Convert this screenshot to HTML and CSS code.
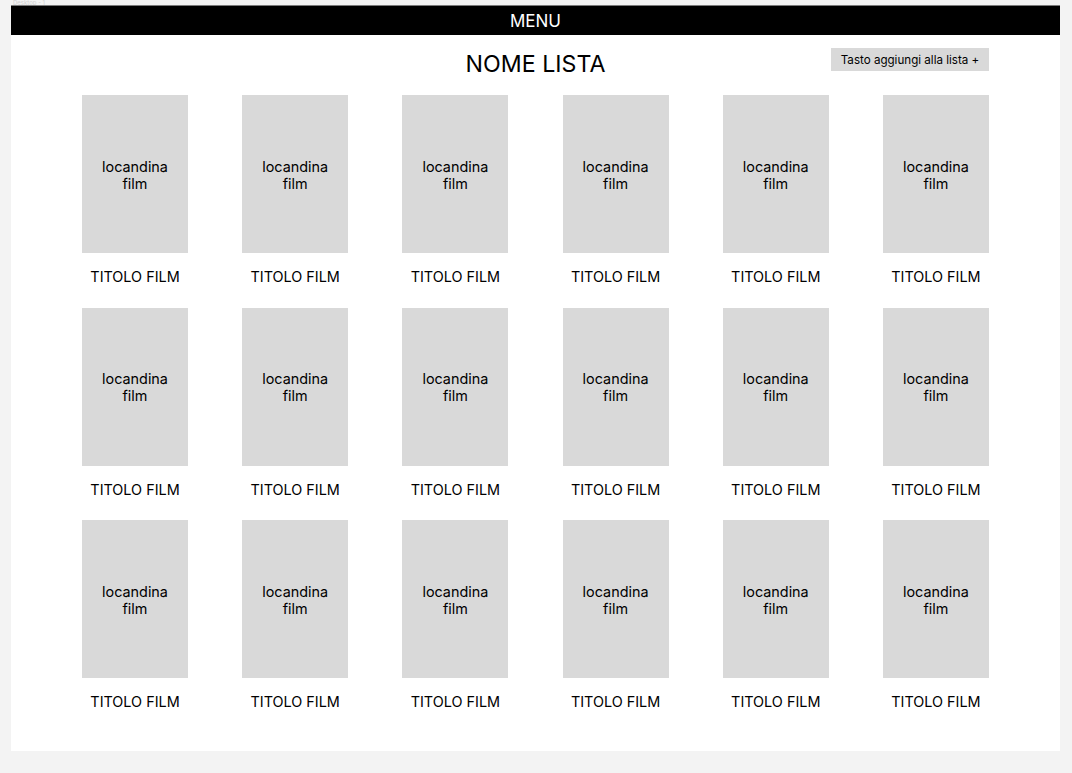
FILE: index.html
```html
<!DOCTYPE html>
<html lang="it">
<head>
<meta charset="utf-8">
<title>Nome lista</title>
<link rel="stylesheet" href="styles.css">
</head>
<body>
<div class="canvas-label"><span>Desktop - 1</span></div>
<div class="frame">
  <div class="menu">MENU</div>
  <div class="content">
    <div class="header">
      <div></div>
      <h1 class="list-title">NOME LISTA</h1>
      <div class="header-right"><button class="add-btn">Tasto aggiungi alla lista +</button></div>
    </div>
    <div class="grid">
      <div class="card"><div class="poster"><span>locandina film</span></div><div class="film-title">TITOLO FILM</div></div>
      <div class="card"><div class="poster"><span>locandina film</span></div><div class="film-title">TITOLO FILM</div></div>
      <div class="card"><div class="poster"><span>locandina film</span></div><div class="film-title">TITOLO FILM</div></div>
      <div class="card"><div class="poster"><span>locandina film</span></div><div class="film-title">TITOLO FILM</div></div>
      <div class="card"><div class="poster"><span>locandina film</span></div><div class="film-title">TITOLO FILM</div></div>
      <div class="card"><div class="poster"><span>locandina film</span></div><div class="film-title">TITOLO FILM</div></div>
      <div class="card"><div class="poster"><span>locandina film</span></div><div class="film-title">TITOLO FILM</div></div>
      <div class="card"><div class="poster"><span>locandina film</span></div><div class="film-title">TITOLO FILM</div></div>
      <div class="card"><div class="poster"><span>locandina film</span></div><div class="film-title">TITOLO FILM</div></div>
      <div class="card"><div class="poster"><span>locandina film</span></div><div class="film-title">TITOLO FILM</div></div>
      <div class="card"><div class="poster"><span>locandina film</span></div><div class="film-title">TITOLO FILM</div></div>
      <div class="card"><div class="poster"><span>locandina film</span></div><div class="film-title">TITOLO FILM</div></div>
      <div class="card"><div class="poster"><span>locandina film</span></div><div class="film-title">TITOLO FILM</div></div>
      <div class="card"><div class="poster"><span>locandina film</span></div><div class="film-title">TITOLO FILM</div></div>
      <div class="card"><div class="poster"><span>locandina film</span></div><div class="film-title">TITOLO FILM</div></div>
      <div class="card"><div class="poster"><span>locandina film</span></div><div class="film-title">TITOLO FILM</div></div>
      <div class="card"><div class="poster"><span>locandina film</span></div><div class="film-title">TITOLO FILM</div></div>
      <div class="card"><div class="poster"><span>locandina film</span></div><div class="film-title">TITOLO FILM</div></div>
    </div>
  </div>
</div>
</body>
</html>
```
FILE: styles.css
```css
html, body {
  margin: 0;
  padding: 0;
  background: #f3f3f3;
  font-family: Inter, "Noto Sans", sans-serif;
  color: #000;
}

body {
  padding-left: 11px;
  width: 1049px;
}

.canvas-label {
  height: 6px;
}

.canvas-label span {
  display: block;
  font-size: 6px;
  line-height: 6px;
  color: #d2d2d2;
  padding-left: 2px;
}

.frame {
  background: #fff;
  height: 745px;
  display: flex;
  flex-direction: column;
}

.menu {
  background: #000;
  color: #fff;
  display: flex;
  align-items: center;
  justify-content: center;
  font-size: 17px;
  line-height: 20px;
  border-top: 1px solid #7a7a7a;
  box-sizing: border-box;
  height: 30px;
  margin-top: -1px;
  padding-top: 1px;
}

.content {
  width: 907px;
  margin: 0 auto;
}

.header {
  display: grid;
  grid-template-columns: 1fr auto 1fr;
  align-items: start;
  height: 60px;
}

.list-title {
  margin: 15px 0 0 0;
  font-size: 23.2px;
  line-height: 29px;
  font-weight: 400;
}

.header-right {
  display: flex;
  justify-content: flex-end;
  padding-top: 13px;
}

.add-btn {
  background: #d9d9d9;
  border: none;
  border-radius: 0;
  height: 23px;
  width: 158px;
  padding: 0;
  font-family: Inter, "Noto Sans", sans-serif;
  font-size: 11.6px;
  color: #000;
}

.grid {
  display: grid;
  grid-template-columns: repeat(6, 106px);
  column-gap: 54.2px;
  row-gap: 21.5px;
}

.card {
  display: flex;
  flex-direction: column;
  align-items: center;
}

.poster {
  width: 106px;
  height: 158px;
  background: #d9d9d9;
  display: flex;
  align-items: center;
  justify-content: center;
  text-align: center;
}

.poster span {
  width: 72px;
  font-size: 14.4px;
  line-height: 17px;
  padding-top: 1px;
}

.film-title {
  margin-top: 15px;
  font-size: 14.4px;
  line-height: 18px;
  white-space: nowrap;
}
```
